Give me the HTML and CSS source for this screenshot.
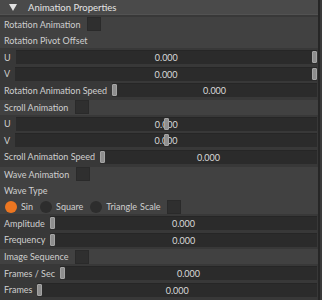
FILE: index.html
```html
<!DOCTYPE html>
<html lang="en">
<head>
    <meta charset="UTF-8">
    <title>Animation Properties</title>
    <link rel="stylesheet" href="styles.css">
</head>
<body>
    <div class="panel">
        <div class="panel-header">
            <svg class="caret" width="8" height="7" viewBox="0 0 8 7"><path d="M0 0 H8 L4 7 Z" fill="#e2e2e2"/></svg>
            <span>Animation Properties</span>
        </div>

        <div class="group">
            <div class="row"><span class="label">Rotation Animation</span><span class="check"></span></div>
            <div class="row"><span class="label">Rotation Pivot Offset</span></div>
        </div>
        <div class="row"><span class="label">U</span><div class="slider"><span class="knob" style="--v:1"></span><span class="value">0.000</span></div></div>
        <div class="row"><span class="label">V</span><div class="slider"><span class="knob" style="--v:1"></span><span class="value">0.000</span></div></div>
        <div class="row"><span class="label">Rotation Animation Speed</span><div class="slider"><span class="knob" style="--v:0"></span><span class="value">0.000</span></div></div>

        <div class="group section">
            <div class="row"><span class="label">Scroll Animation</span><span class="check"></span></div>
        </div>
        <div class="row"><span class="label">U</span><div class="slider"><span class="knob" style="--v:0.5"></span><span class="value">0.000</span></div></div>
        <div class="row"><span class="label">V</span><div class="slider"><span class="knob" style="--v:0.5"></span><span class="value">0.000</span></div></div>
        <div class="row"><span class="label">Scroll Animation Speed</span><div class="slider"><span class="knob" style="--v:0"></span><span class="value">0.000</span></div></div>

        <div class="group section">
            <div class="row"><span class="label">Wave Animation</span><span class="check"></span></div>
            <div class="row"><span class="label">Wave Type</span></div>
            <div class="row radios">
                <span class="radio on"></span><span class="label">Sin</span>
                <span class="radio"></span><span class="label">Square</span>
                <span class="radio"></span><span class="label tight">Triangle</span>
                <span class="label">Scale</span><span class="check"></span>
            </div>
        </div>
        <div class="row"><span class="label">Amplitude</span><div class="slider"><span class="knob" style="--v:0"></span><span class="value">0.000</span></div></div>
        <div class="row"><span class="label">Frequency</span><div class="slider"><span class="knob" style="--v:0"></span><span class="value">0.000</span></div></div>

        <div class="group section">
            <div class="row"><span class="label">Image Sequence</span><span class="check"></span></div>
        </div>
        <div class="row"><span class="label">Frames / Sec</span><div class="slider"><span class="knob" style="--v:0"></span><span class="value">0.000</span></div></div>
        <div class="row"><span class="label">Frames</span><div class="slider"><span class="knob" style="--v:0"></span><span class="value">0.000</span></div></div>
    </div>
</body>
</html>
```

FILE: styles.css
```css
body {
    margin: 0;
    background-color: #3a3a3a;
    font-family: Lato, "Liberation Sans", sans-serif;
    font-size: 9px;
    color: #cfcfcf;
    overflow: hidden;
}

.panel {
    width: 318px;
    height: 300px;
    border-right: 2px solid #262626;
    background-color: #383838;
    display: flex;
    flex-direction: column;
    gap: 1.4px;
}

/* header bar */
.panel-header {
    height: 15px;
    flex: none;
    display: flex;
    align-items: center;
    padding-left: 9px;
    margin-bottom: 0.6px;
    background-color: #4a4a4a;
    border-bottom: 1px solid #525252;
    box-sizing: border-box;
    color: #e4e4e4;
    font-size: 9.5px;
}

.caret {
    margin-right: 11px;
}

.group {
    display: flex;
    flex-direction: column;
    gap: 1.4px;
    background-color: #414141;
}

.group.section {
    margin-top: 1px;
}

.row {
    height: 15px;
    flex: none;
    display: flex;
    align-items: center;
    padding: 0 1px 0 4px;
}

.label {
    white-space: nowrap;
    margin-right: 5px;
}

.check {
    width: 14px;
    height: 14px;
    box-sizing: border-box;
    background-color: #2f2f2f;
    border: 1px solid #2a2a2a;
    margin-left: 2px;
}

/* slider field */
.slider {
    flex: 1;
    height: 14px;
    position: relative;
    background-color: #2b2b2b;
    border-top: 1px solid #262626;
    box-sizing: border-box;
    display: flex;
    align-items: center;
    justify-content: center;
}

.value {
    color: #d9d9d9;
    position: relative;
}

.knob {
    position: absolute;
    top: 0;
    left: calc(var(--v) * (100% - 5px));
    width: 5px;
    height: 12px;
    box-sizing: border-box;
    background-color: #8e8e8e;
    border: 1px solid #a4a4a4;
    border-radius: 1px;
    z-index: 1;
}

/* wave type choices */
.radios {
    padding-left: 5px;
}

.radios .label {
    margin-right: 7px;
}

.radios .label.tight {
    margin-right: 3px;
}

.radio {
    width: 12px;
    height: 12px;
    border-radius: 50%;
    background-color: #2d2d2d;
    margin-right: 4px;
}

.radio.on {
    background-color: #ec7621;
}

.radios .check {
    margin-left: -1px;
}
```
